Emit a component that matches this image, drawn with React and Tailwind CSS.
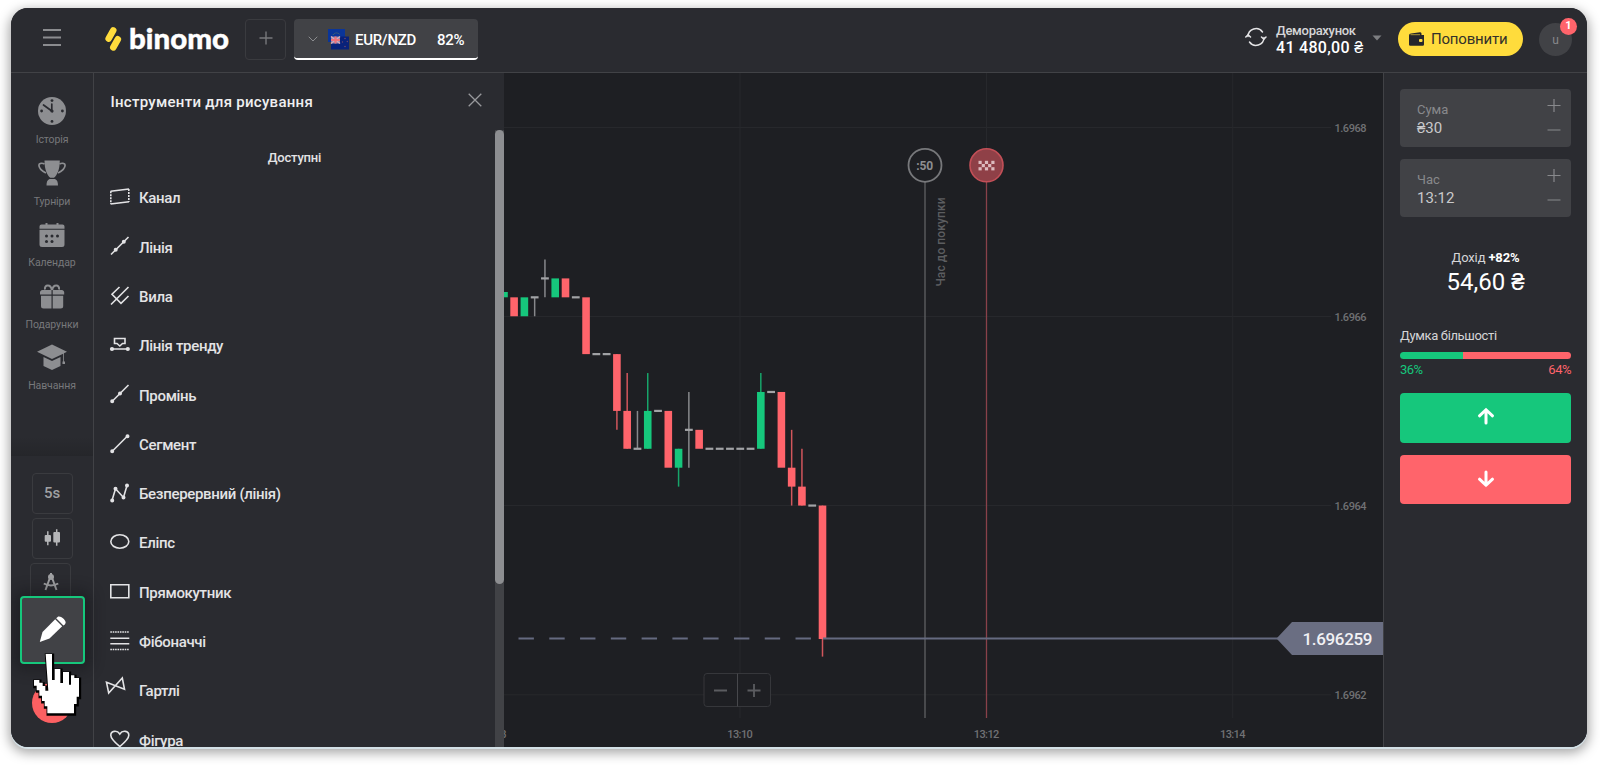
import { ChevronDown } from "lucide-react";

const GREEN = "#16c77c";
const RED = "#ff646b";
const INK = "#2a2b30";

// Sidebar icons
const ClockIcon = () => (
  <svg width="28" height="28" viewBox="0 0 28 28">
    <circle cx="14" cy="14" r="14" fill="#8d8e91" />
    <g fill={INK}>
      <circle cx="14" cy="3.6" r="1.4" />
      <circle cx="14" cy="24.4" r="1.4" />
      <circle cx="3.6" cy="14" r="1.4" />
      <circle cx="24.4" cy="14" r="1.4" />
    </g>
    <path d="M5.5 8 13.8 14V7" fill="none" stroke={INK} strokeWidth="1.7" strokeLinecap="round" />
    <circle cx="14" cy="14" r="1.6" fill={INK} />
  </svg>
);

const TrophyIcon = () => (
  <svg width="28" height="28" viewBox="0 0 28 28">
    <path
      d="M6.500 1.500h15.300c0 9-2.600 14.800-5.800 17.300h-3.700C9.100 16.300 6.500 10.500 6.500 1.500zM11.500 20h5.500c2.200 1 3 3 3 6.500H8.500c0-3.500.8-5.500 3-6.500z"
      fill="#8d8e91"
    />
    <path
      d="M6.500 5C4.500 3.800 1 4 .9 6c0 3.500 3 6 7 8M21.500 5c2-1.200 5.500-1 5.600 1 0 3.500-3 6-7 8"
      fill="none"
      stroke="#8d8e91"
      strokeWidth="1.700"
    />
  </svg>
);

const CalendarIcon = () => (
  <svg className="overflow-visible" width="28" height="28" viewBox="0 -2.5 28 28">
    <path
      d="M3.500 2h4V.5h2V2h9V.5h2V2h4a2 2 0 0 1 2 2v2.200h-25V4a2 2 0 0 1 2-2zM1.500 7.300h25V22a2.500 2.500 0 0 1-2.500 2.500H4A2.500 2.500 0 0 1 1.500 22z"
      fill="#8d8e91"
    />
    <g fill={INK}>
      <circle cx="8.500" cy="13.500" r="1.500" />
      <circle cx="14" cy="13.500" r="1.500" />
      <circle cx="19.500" cy="13.500" r="1.500" />
      <circle cx="8.500" cy="19" r="1.500" />
      <circle cx="14" cy="19" r="1.500" />
    </g>
  </svg>
);

const GiftIcon = () => (
  <svg className="overflow-visible" width="28" height="28" viewBox="0 -1.5 28 28">
    <path
      d="M2 9.500a2.500 2.500 0 0 1 2.500-3h9v4.500H2zM14.700 6.500h9a2.500 2.500 0 0 1 2.500 3V11H14.700zM3 12.200h10.500V25H5.500A2.500 2.500 0 0 1 3 22.500zM14.700 12.200H25.200v10.300a2.500 2.500 0 0 1-2.500 2.500h-8z"
      fill="#8d8e91"
    />
    <path
      d="M13.800 6.500c-.5-3-2-4.500-4-4.500S6.500 3.500 7 6M14.200 6.500c.5-3 2-4.500 4-4.500s3.300 1.500 2.800 4"
      fill="none"
      stroke="#8d8e91"
      strokeWidth="2"
    />
  </svg>
);

const CapIcon = () => (
  <svg width="32" height="28" viewBox="0 -1.5 32 28">
    <path
      d="M16 0 31 7.200l-3 1.500V17h1v2.500h-2.500V17h.7V9.300L16 14.500 1 7.200zM7.500 12.400l8.500 4.100 8.500-4.100V21.500L16 25.500 7.500 21.500z"
      fill="#8d8e91"
    />
  </svg>
);

const NAV = [
  { label: "Історія", Icon: ClockIcon },
  { label: "Турніри", Icon: TrophyIcon },
  { label: "Календар", Icon: CalendarIcon },
  { label: "Подарунки", Icon: GiftIcon },
  { label: "Навчання", Icon: CapIcon },
];

// Drawing tools, every icon on a 20x20 grid
const TOOLS = [
  {
    label: "Канал",
    icon: (
      <>
        <path d="M.6 4.300 19 2M.6 17 19 14.700" />
        <path d="M.8 4.300v12.700M18.800 2v13" strokeDasharray="2 1" />
      </>
    ),
  },
  {
    label: "Лінія",
    icon: (
      <>
        <path d="M1 18.500 18.500 1" />
        <circle cx="5.700" cy="13.800" r="1.200" fill="currentColor" />
        <circle cx="13.800" cy="5.800" r="1.200" fill="currentColor" />
      </>
    ),
  },
  {
    label: "Вила",
    icon: <path d="M1 18.500 18.500 1M9.500 1 2 8.300l9 9L18.500 10" />,
  },
  {
    label: "Лінія тренду",
    icon: (
      <>
        <path d="M2 14h16M4.500 3.500h10.500v5h-2.500L9.800 11 7 8.500H4.500z" />
        <circle cx="2" cy="14" r="1.300" fill="currentColor" />
        <circle cx="17.800" cy="14" r="1.300" fill="currentColor" />
      </>
    ),
  },
  {
    label: "Промінь",
    icon: (
      <>
        <path d="M2 17.500 18.500 1" />
        <circle cx="2.200" cy="17.300" r="1.200" fill="currentColor" />
        <circle cx="10" cy="9.500" r="1.200" fill="currentColor" />
      </>
    ),
  },
  {
    label: "Сегмент",
    icon: (
      <>
        <path d="M2 17.500 17.500 2" />
        <circle cx="2.200" cy="17.300" r="1.200" fill="currentColor" />
        <circle cx="17.500" cy="2.200" r="1.200" fill="currentColor" />
      </>
    ),
  },
  {
    label: "Безперервний (лінія)",
    icon: (
      <>
        <path d="M2 17.500 5.500 5.800l8 8.700L17 2.500" />
        <circle cx="2.200" cy="17.500" r="1.200" fill="currentColor" />
        <circle cx="5.500" cy="5.800" r="1.200" fill="currentColor" />
        <circle cx="13.500" cy="14.500" r="1.200" fill="currentColor" />
        <circle cx="17" cy="2.500" r="1.200" fill="currentColor" />
      </>
    ),
  },
  { label: "Еліпс", icon: <ellipse cx="9.800" cy="9.500" rx="9" ry="6.700" /> },
  { label: "Прямокутник", icon: <path d="M.8 2.800h18v13H.8z" /> },
  {
    label: "Фібоначчі",
    icon: (
      <>
        <path d="M.3 7.200h19M.3 12.800h19" />
        <path d="M.3 1h19M.3 18.500h19" strokeDasharray="1.600 .8" />
      </>
    ),
  },
  { label: "Гартлі", icon: <path d="M-3.500 2.300 14.500 9.300 12.300-2 -1.300 13z" /> },
  {
    label: "Фігура",
    icon: <path d="M9.800 17.500C5 13.500.8 10 .8 6.200.8 1.800 7 .8 9.800 5c2.800-4.200 9-3.200 9 1.200 0 3.800-4.200 7.300-9 11.300z" />,
  },
];

// Chart: open/close/high/low counted in ticks down from the top of the range
const TOP = 278.4;
const TICK = 18.93;
const START_X = 514.1;
const STEP = 10.28;

const CANDLES = [
  ["down", 1, 2],
  ["up", 1, 2],
  ["flat", 1, 1, 1, 2],
  ["flat", 0, 0, -1, 1],
  ["up", 0, 1],
  ["down", 0, 1],
  ["flat", 1, 1],
  ["down", 1, 4],
  ["flat", 4, 4],
  ["flat", 4, 4],
  ["down", 4, 7, 4, 8],
  ["down", 7, 9, 5, 9],
  ["flat", 9, 9, 7, 9],
  ["up", 7, 9, 5, 9],
  ["flat", 7, 7],
  ["down", 7, 10],
  ["up", 9, 10, 9, 11],
  ["flat", 8, 8, 6, 10],
  ["down", 8, 9],
  ["flat", 9, 9],
  ["flat", 9, 9],
  ["flat", 9, 9],
  ["flat", 9, 9],
  ["flat", 9, 9],
  ["up", 6, 9, 5, 9],
  ["flat", 6, 6],
  ["down", 6, 10],
  ["down", 10, 11, 8, 12],
  ["down", 11, 12, 9, 12],
  ["flat", 12, 12],
  ["down", 12, 19.05, 12, 19.98],
];

const COLORS = { up: GREEN, down: RED, flat: "#a2a3a6" };

const PRICES = [
  ["1.6968", 127.5],
  ["1.6966", 316.5],
  ["1.6964", 505.5],
  ["1.6962", 694.8],
];
const TIMES = [
  ["13:08", 493.7],
  ["13:10", 740],
  ["13:12", 986.5],
  ["13:14", 1232.7],
];

function Candle({ index, data }) {
  const [kind, top, bottom, high, low] = data;
  const x = START_X + index * STEP;
  const y = TOP + top * TICK;
  return (
    <g>
      {high !== undefined && (
        <path
          d={`M${x} ${TOP + high * TICK}V${TOP + low * TICK}`}
          stroke={COLORS[kind]}
          strokeWidth="1.500"
          opacity="0.800"
        />
      )}
      {kind === "flat" ? (
        <rect x={x - 3.9} y={y - 1.1} width="7.800" height="2.200" fill={COLORS.flat} />
      ) : (
        <rect x={x - 3.8} y={y} width="7.600" height={(bottom - top) * TICK} fill={COLORS[kind]} />
      )}
    </g>
  );
}

function Chart() {
  return (
    <svg
      className="block h-[674px] w-[879px] bg-[#1e1f23] font-[Roboto,sans-serif]"
      viewBox="504 73 879 674"
    >
      <g stroke="#27282c" strokeWidth="1">
        {PRICES.map(([label, y]) => (
          <path key={label} d={`M504 ${y}H1331`} />
        ))}
        {TIMES.map(([label, x]) => (
          <path key={label} d={`M${x} 73V718`} />
        ))}
      </g>
      <g fill="#707174" fontSize="11">
        {PRICES.map(([label, y]) => (
          <text key={label} x="1334.500" y={y + 4.5} textLength="32" fontWeight="500">
            {label}
          </text>
        ))}
        {TIMES.map(([label, x]) => (
          <text key={label} x={x - 12.7} y="737.500" textLength="25.500" fontWeight="500">
            {label}
          </text>
        ))}
      </g>

      <rect x="504" y="292" width="3.800" height="5.300" fill={GREEN} />
      {CANDLES.map((data, index) => (
        <Candle key={index} index={index} data={data} />
      ))}

      {/* Purchase deadline */}
      <path d="M925 182V718" stroke="#5b5c5f" strokeWidth="1.400" />
      <circle cx="925" cy="165.300" r="16.500" fill="#1e1f23" stroke="#77787b" strokeWidth="1.800" />
      <text x="924.700" y="170" textAnchor="middle" fontSize="12" fontWeight="700" fill="#8d8e91" textLength="17">
        :50
      </text>
      <text
        transform="translate(945 286.500) rotate(-90)"
        fontSize="12"
        fontWeight="500"
        fill="#5c5d60"
        textLength="89"
      >
        Час до покупки
      </text>

      {/* Expiration */}
      <path d="M986.500 182V718" stroke="#89414a" strokeWidth="1.300" />
      <circle cx="986.500" cy="165.300" r="16.500" fill="#8f4047" stroke="#c24f57" strokeWidth="1.600" />
      <g fill="#dcbabd">
        {[0, 1, 2].map((row) =>
          [0, 1, 2, 3, 4].map(
            (col) =>
              (row + col) % 2 === 0 && (
                <rect key={`${row}-${col}`} x={978.5 + col * 3.2} y={160.8 + row * 3.2} width="3.200" height="3.200" />
              )
          )
        )}
      </g>

      {/* Current price */}
      <path d="M518.500 638.500H820" stroke="#656a80" strokeWidth="2.200" strokeDasharray="15.400 15.380" />
      <path d="M823 638.500H1278" stroke="#656a80" strokeWidth="2" />
      <path d="M1276.500 638.500 1292 622h91v33h-91z" fill="#6a6e82" />
      <text x="1302.500" y="645" fontSize="17" fontWeight="500" fill="#f1f1f4" textLength="70">
        1.696259
      </text>

      {/* Zoom controls */}
      <rect x="704" y="673.500" width="66.500" height="33" rx="3" fill="#1e1f23" stroke="#36373b" />
      <path d="M737.500 673.500v33" stroke="#47484c" />
      <path d="M714.500 690.500h13M748 690.500h13M754.500 684v13" transform="translate(-.5 0)" stroke="#5b5c60" strokeWidth="1.800" fill="none" />
    </svg>
  );
}

function Header() {
  return (
    <header className="flex h-[65px] shrink-0 items-start border-b border-[#414246] bg-[#2a2b30]">
      <svg className="mt-[20px] ml-[31px]" width="20" height="18" viewBox="0 0 20 18">
        <path d="M1 2h18M1 9.500h18M1 17h18" stroke="#8b8c8f" strokeWidth="1.800" />
      </svg>

      <div className="mt-[11px] ml-[41px] flex w-[128px] items-start">
        <svg className="mt-[6px]" width="20" height="28" viewBox="0 0 20 28">
          <g stroke="#ffdc3c" strokeWidth="6.600" strokeLinecap="round">
            <path d="m10.200 5.500-4.500 8M14.800 14.300l-4.500 8" />
          </g>
        </svg>
        <svg className="ml-[3px] overflow-visible" width="105" height="40" viewBox="0 0 105 40">
          <text
            x="3"
            y="29.500"
            fontFamily="Lato, sans-serif"
            fontWeight="900"
            fontSize="28"
            fill="#fff"
            stroke="#fff"
            strokeWidth=".4"
            textLength="100"
            lengthAdjust="spacingAndGlyphs"
          >
            binomo
          </text>
        </svg>
      </div>

      <button className="mt-[11px] ml-[14px] flex h-[41px] w-[41px] items-center justify-center rounded border border-[#3a3b3f]">
        <svg className="mb-[3px]" width="14" height="14" viewBox="0 0 14 14">
          <path d="M.5 7h13M7 .5v13" stroke="#77787b" strokeWidth="1.400" />
        </svg>
      </button>

      <button className="mt-[11px] ml-[8px] flex h-[41px] w-[184px] items-center rounded border-b-2 border-white bg-[#414246] pt-[3px] pl-[11px] text-[15px] font-medium text-white">
        <ChevronDown size={16} strokeWidth={1.5} className="mb-[2px] text-[#8b8c8f]" />
        <svg className="ml-[7px]" width="22" height="22" viewBox="0 0 22 22">
          <path d="M0 0h17v13H0z" fill="#0a3599" />
          <path d="M5 6a4 4 0 0 1 7 0" fill="none" stroke="#657955" strokeWidth="1" strokeDasharray="1 1" />
          <path d="M3 7.500h18v13H3z" fill="#08227a" />
          <path d="M3 7.500h9v7H3z" fill="#8587b5" />
          <path d="m3 7.500 9 7M12 7.500l-9 7" stroke="#d7a9b8" strokeWidth="1.500" />
          <path d="M7.500 7.500v7M3 11h9" stroke="#f0737b" strokeWidth="2" />
          <circle cx="17" cy="9.500" r=".8" fill="#6b496d" />
          <circle cx="17" cy="17.500" r=".8" fill="#6b496d" />
          <circle cx="14.500" cy="13" r=".7" fill="#6b496d" />
          <circle cx="19.300" cy="12.500" r=".7" fill="#6b496d" />
        </svg>
        <span className="ml-[5px] w-[60px] tracking-[-0.3px] whitespace-nowrap">EUR/NZD</span>
        <span className="ml-[22px] tracking-[-0.3px]">82%</span>
      </button>

      <svg className="mt-[18px] ml-[767px]" width="22" height="22" viewBox="0 0 22 22">
        <g fill="none" stroke="#e4e4e6" strokeWidth="1.500" strokeLinecap="round">
          <path d="M3 10.500a8 8 0 0 1 14.500-4.500M19 11.500A8 8 0 0 1 4.500 16" />
          <path d="m.8 11 2.300-2.300L5.500 11M16.500 11l2.300 2.300L21 11" />
        </g>
      </svg>
      <div className="mt-[14px] ml-[9px] w-[92px] whitespace-nowrap text-white">
        <div className="text-[13px] leading-[17px] font-medium tracking-[-0.3px] text-[#d5d5d7]">Деморахунок</div>
        <div className="text-[16px] leading-[18px] font-medium tracking-[0.3px]">41 480,00 ₴</div>
      </div>
      <svg className="mt-[27px] ml-[4px]" width="10" height="6" viewBox="0 0 10 6">
        <path d="M.5.500h9L5 5.500z" fill="#7d7e81" />
      </svg>

      <button className="mt-[14px] ml-[16px] flex h-[34px] w-[125px] items-center rounded-full bg-[#ffdc3c] pl-[11px] text-[#33312a]">
        <svg width="15" height="14" viewBox="0 0 15 14">
          <path d="M2 1.500 11 .3a1.500 1.500 0 0 1 1.500 1.200V3H15v9.500a1.300 1.300 0 0 1-1.300 1.300H1.300A1.300 1.300 0 0 1 0 12.500v-9A2 2 0 0 1 2 1.500z" fill="#26272b" />
          <path d="M1.500 2.700h9.500" stroke="#ffdc3c" strokeWidth=".6" />
          <rect x="10" y="7" width="3.500" height="3" rx="1" fill="#ffdc3c" />
        </svg>
        <span className="ml-[7px] text-[15px] tracking-[-0.2px]">Поповнити</span>
      </button>

      <div className="relative mt-[15px] ml-[16px] flex h-[33px] w-[33px] items-center justify-center rounded-full bg-[#414246] text-[12px] text-[#87888b]">
        u
        <span className="absolute top-[-5px] right-[-5px] flex h-[17px] w-[17px] items-center justify-center rounded-full bg-[#ff646b] text-[11px] font-bold text-white">
          1
        </span>
      </div>
    </header>
  );
}

function Sidebar() {
  return (
    <aside className="relative flex w-[83px] shrink-0 flex-col border-r border-[#414246] bg-[#2a2b30]">
      <nav className="flex h-[383px] flex-col items-center bg-linear-to-b from-[#2a2b30] from-95% to-[#25262a] pt-[24px]">
        {NAV.map(({ label, Icon }) => (
          <a key={label} className="flex h-[61.600px] shrink-0 flex-col items-center">
            <Icon />
            <span className="mt-[8px] text-[10.500px] leading-[14px] tracking-[-0.1px] whitespace-nowrap text-[#77787b]">
              {label}
            </span>
          </a>
        ))}
      </nav>

      <div className="flex grow flex-col items-center gap-[4px] pt-[17px]">
        <button className="flex h-[41px] w-[41px] items-center justify-center rounded border border-[#3a3b3f] text-[15px] font-medium text-[#a0a1a3]">
          5s
        </button>
        <button className="flex h-[41px] w-[41px] items-center justify-center rounded border border-[#3a3b3f]">
          <svg className="overflow-visible" width="16" height="18" viewBox="0 0 16 18">
            <g fill="#b5b6b8">
              <rect x=".7" y="5" width="6.300" height="6.700" rx="1" />
              <rect x="9.300" y="2" width="6.700" height="10.500" rx="1" />
            </g>
            <path d="M3.800 1.200v14M12.700-.8v16.600" stroke="#b5b6b8" strokeWidth="1.500" />
          </svg>
        </button>
        <button className="mr-[3px] flex h-[41px] w-[41px] justify-center rounded border border-[#3a3b3f] pt-[9px]">
          <svg width="16" height="18" viewBox="0 0 16 18">
            <circle cx="8" cy="4" r="3" fill="#a0a1a3" />
            <path d="M8 0v3M6.500 6 2.500 17M9.500 6l4 11M.8 10.500c4 2.600 10.400 2.600 14.400 0" fill="none" stroke="#a0a1a3" strokeWidth="2" />
          </svg>
        </button>
        <span className="mt-[75px] h-[40px] w-[40px] shrink-0 rounded-full bg-[#fc6062]" />
      </div>

      {/* Active tool button */}
      <button className="absolute top-[523px] left-[9px] flex h-[68px] w-[65px] items-center justify-center rounded-[4px] border-2 border-[#16c77c] bg-[#414246] shadow-[0_0_14px_6px_rgba(20,20,24,0.45)]">
        <svg className="mb-[2px]" width="28" height="28" viewBox="0 0 28 28" fill="#fff">
          <path d="M.8 27 3.500 17 16.200 4.300l7 7L10.500 23.500z" />
          <path d="m17.200 3.300 1.400-1.300c2.500-2.300 10.500 4 7.200 7.500l-1.400 1z" />
        </svg>
      </button>
      <svg className="absolute top-[577px] left-[21px]" width="50" height="69" viewBox="96 630 150 207">
        <path
          d="M138 642h19v78h8v-33h17v42h8v-33h18v38h6v-28h10v8h14v56h-7v22h-8v28h-80v-21h-8v-16h-8v-16h-8v-16h-8v-14h-8v-17h16v8h10v10h8v14h9z"
          transform="translate(1 3)"
          fill="#000"
          stroke="#000"
          strokeWidth="9"
        />
        <path
          d="M138 642h19v78h8v-33h17v42h8v-33h18v38h6v-28h10v8h14v56h-7v22h-8v28h-80v-21h-8v-16h-8v-16h-8v-16h-8v-14h-8v-17h16v8h10v10h8v14h9z"
          fill="#fff"
          transform="translate(-1 0)"
        />
      </svg>
    </aside>
  );
}

function ToolsPanel() {
  return (
    <section className="flex w-[410px] shrink-0 flex-col bg-[#2a2b30]">
      <div className="flex h-[57px] shrink-0 items-center justify-between pr-[21px] pl-[16.500px] text-[#efeff0]">
        <h2 className="pt-[1px] text-[15px] font-medium tracking-[0.280px]">Інструменти для рисування</h2>
        <svg className="mr-[1px] mb-[3px]" width="14" height="14" viewBox="0 0 14 14">
          <path d="m.7.700 12.600 12.600M13.300.700.7 13.300" stroke="#98999c" strokeWidth="1.300" />
        </svg>
      </div>
      <div className="flex min-h-0 grow">
        <div className="flex grow flex-col overflow-hidden">
          <div className="h-[43.500px] shrink-0 pt-[19px] text-center text-[13px] leading-[18px] font-medium tracking-[-0.200px] text-[#e3e3e5]">
            Доступні
          </div>
          {TOOLS.map(({ label, icon }) => (
            <div key={label} className="flex h-[49.300px] shrink-0 items-center pl-[16px] text-[#e3e3e5]">
              <svg
                className="mb-[2px] overflow-visible"
                width="20"
                height="20"
                viewBox="0 0 20 20"
                fill="none"
                stroke="currentColor"
                strokeWidth="1.600"
              >
                {icon}
              </svg>
              <span className="ml-[9px] pt-[1px] text-[15px] font-medium tracking-[-0.320px]">{label}</span>
            </div>
          ))}
        </div>
        <div className="w-[9px] bg-[#414246]">
          <div className="h-[454px] rounded-full bg-[#8d8e91]" />
        </div>
      </div>
    </section>
  );
}

function Field({ label, value }) {
  return (
    <div className="flex h-[58px] justify-between rounded bg-[#414246] pr-[10px] pl-[17px]">
      <div className="pt-[11px]">
        <div className="text-[13px] leading-[19px] text-[#88898c]">{label}</div>
        <div className="text-[15px] leading-[18px] text-[#c9c9cb]">{value}</div>
      </div>
      <svg className="mt-[9px]" width="14" height="36" viewBox="0 0 14 36">
        <path d="M.5 7.500h13M7 1v13M.5 32h13" stroke="#88898c" strokeWidth="1.200" />
      </svg>
    </div>
  );
}

function TradePanel() {
  return (
    <aside className="flex grow flex-col border-l border-[#414246] bg-[#2a2b30] px-[16px] pt-[16px]">
      <div className="flex flex-col gap-[12px]">
        <Field label="Сума" value="₴30" />
        <Field label="Час" value="13:12" />
      </div>

      <div className="mt-[31px] text-center text-white">
        <div className="text-[13px] leading-[19px] tracking-[-0.150px]">
          <span className="text-[#d5d5d7]">Дохід</span> <b>+82%</b>
        </div>
        <div className="text-[24px] leading-[30px]">54,60 ₴</div>
      </div>

      <div className="mt-[30px] text-[13px] leading-[18px] tracking-[-0.350px] text-[#d5d5d7]">Думка більшості</div>
      <div className="mt-[7px] flex h-[7px] overflow-hidden rounded-full">
        <span className="w-[37%] bg-[#16c77c]" />
        <span className="grow bg-[#ff646b]" />
      </div>
      <div className="mt-[2px] flex justify-between text-[13px] leading-[18px] tracking-[-0.500px]">
        <span className="text-[#16c77c]">36%</span>
        <span className="text-[#ff646b]">64%</span>
      </div>

      <button className="mt-[14px] flex h-[50px] items-center justify-center rounded bg-[#16c77c]">
        <svg className="mb-[4px]" width="18" height="18" viewBox="0 0 18 18">
          <path d="M9 16V3M2.500 8.800 9 2.700l6.500 6.100" fill="none" stroke="#fff" strokeWidth="3" strokeLinecap="round" />
        </svg>
      </button>
      <button className="mt-[12px] flex h-[49px] items-center justify-center rounded bg-[#ff646b]">
        <svg className="mb-[2px]" width="18" height="18" viewBox="0 0 18 18">
          <path d="M9 2v13M2.500 9.200 9 15.300l6.500-6.100" fill="none" stroke="#fff" strokeWidth="3" strokeLinecap="round" />
        </svg>
      </button>
    </aside>
  );
}

export default function App() {
  return (
    <div className="h-[765px] w-[1600px] overflow-hidden bg-white pt-[8px] pl-[11px] font-[Roboto,sans-serif]">
      <div className="flex h-[739px] w-[1576px] flex-col overflow-hidden rounded-[17px] bg-[#2a2b30] shadow-[0_2px_0_#d3e0e6,0_4px_12px_2px_rgba(0,0,0,0.35)]">
        <Header />
        <main className="flex min-h-0 grow">
          <Sidebar />
          <ToolsPanel />
          <Chart />
          <TradePanel />
        </main>
      </div>
    </div>
  );
}
